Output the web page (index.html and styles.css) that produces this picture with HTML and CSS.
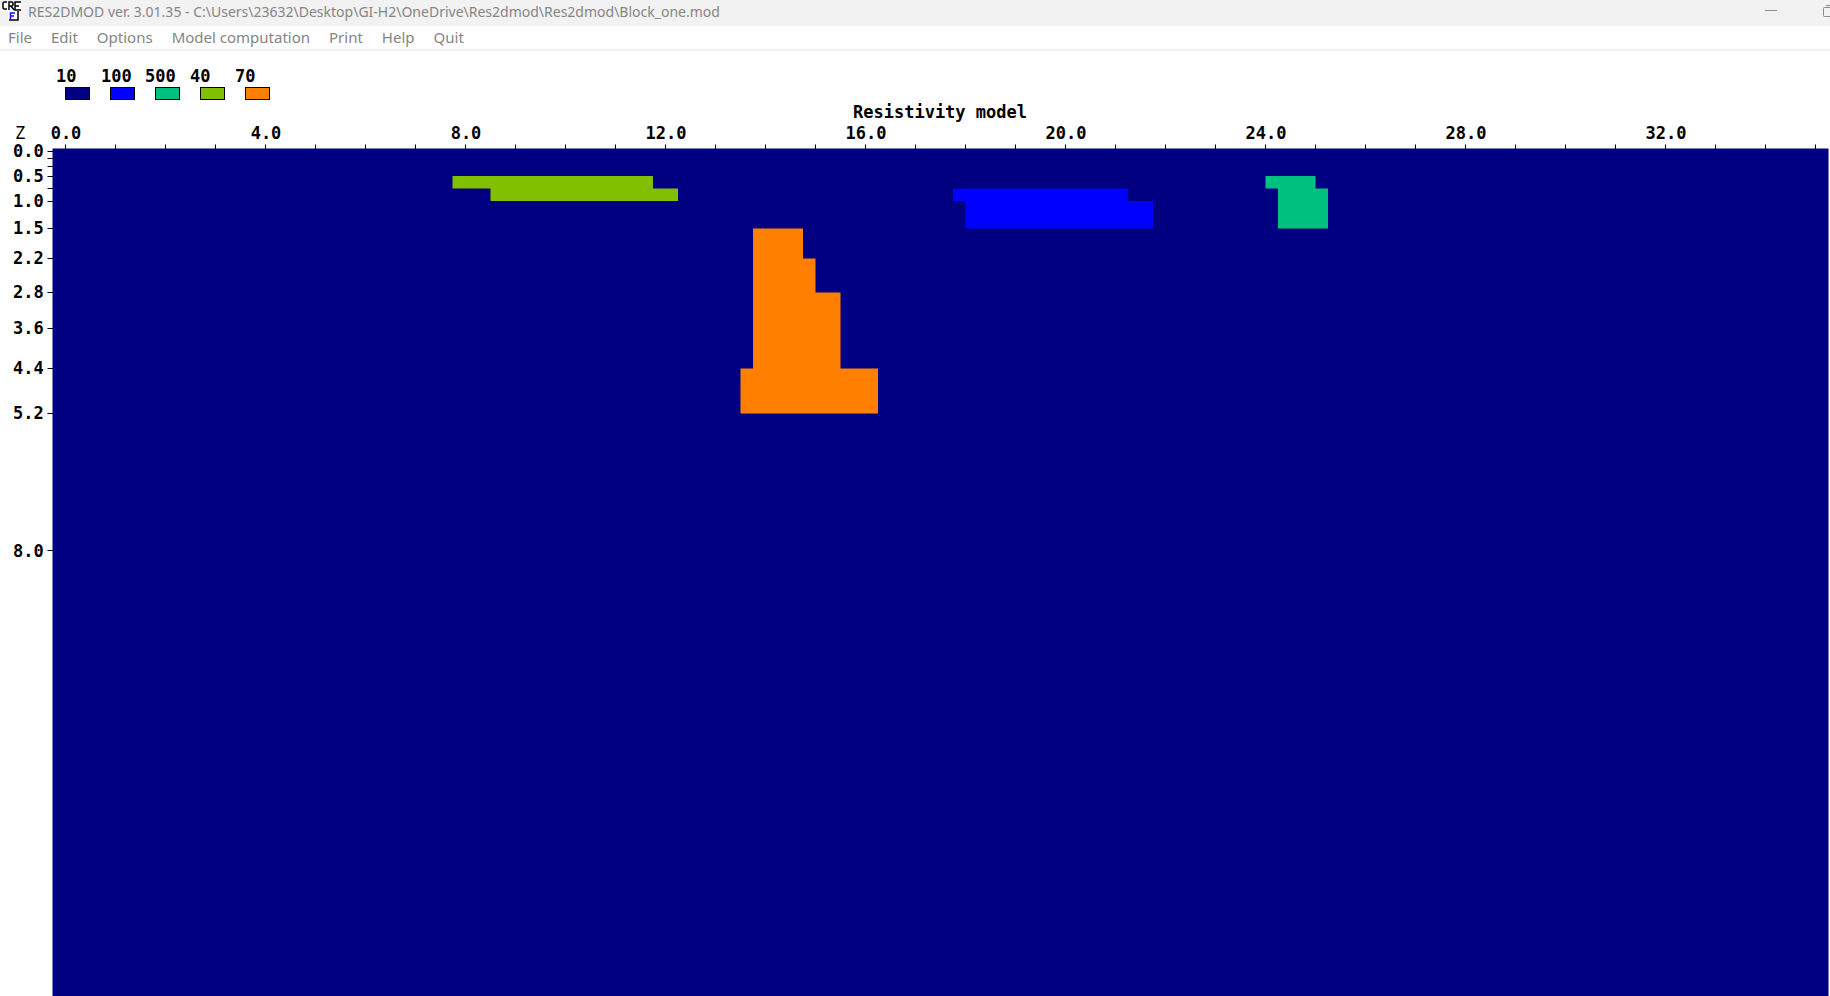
FILE: index.html
```html
<!DOCTYPE html>
<html lang="en">
<head>
<meta charset="utf-8">
<title>RES2DMOD</title>
<link rel="stylesheet" href="styles.css">
</head>
<body>
<header class="titlebar">
  <svg class="app-icon" viewBox="0 0 20 21" aria-hidden="true">
    <path fill="#fff" d="M2 1h18v10H2zM7 10h11v11H7z"/>
    <path fill="none" stroke="#000" stroke-width="1.500" d="M6 2H3L2 3v5l1 1h3M8 10V2h3l1 1v2l-1 1H8m2 0 3 4M20 2h-6v8h6M14 6h4M17 11v9H8"/>
    <path fill="none" stroke="#1010ff" stroke-width="1.500" d="M9.500 19v-6H14M9.500 16H13"/>
  </svg>
  <h1 class="title">RES2DMOD ver. 3.01.35 - C:\Users\23632\Desktop\GI-H2\OneDrive\Res2dmod\Res2dmod\Block_one.mod</h1>
  <div class="window-buttons">
    <button class="window-button" aria-label="Minimize"><svg width="12" height="14" viewBox="0 0 12 14"><path d="M0 6.5h12"/></svg></button>
    <button class="window-button" aria-label="Restore"><svg width="12" height="14" viewBox="0 0 12 14"><path d="M.5 4.5q0-1 1-1h6q1 0 1 1v7q0 1-1 1h-6q-1 0-1-1zM3 1.500h6q2 0 2 2v7"/></svg></button>
  </div>
</header>
<nav class="menubar">
  <button class="menu-item">File</button>
  <button class="menu-item">Edit</button>
  <button class="menu-item">Options</button>
  <button class="menu-item">Model computation</button>
  <button class="menu-item">Print</button>
  <button class="menu-item">Help</button>
  <button class="menu-item">Quit</button>
</nav>
<main>
  <svg class="chart" viewBox="0 51 1830 945" role="img" aria-label="Resistivity model">
    <g class="label">
      <text x="56" y="82">10</text>
      <text x="101" y="82">100</text>
      <text x="145" y="82">500</text>
      <text x="190" y="82">40</text>
      <text x="235" y="82">70</text>
    </g>
    <g class="swatches">
      <rect class="r10" x="65.500" y="87.500" width="24" height="12"/>
      <rect class="r100" x="110.500" y="87.500" width="24" height="12"/>
      <rect class="r500" x="155.500" y="87.500" width="24" height="12"/>
      <rect class="r40" x="200.500" y="87.500" width="24" height="12"/>
      <rect class="r70" x="245.500" y="87.500" width="24" height="12"/>
    </g>
    <g class="label centered">
      <text x="940" y="118">Resistivity model</text>
      <text class="axis-name" x="20" y="139">Z</text>
      <text x="66" y="139">0.0</text>
      <text x="266" y="139">4.0</text>
      <text x="466" y="139">8.0</text>
      <text x="666" y="139">12.0</text>
      <text x="866" y="139">16.0</text>
      <text x="1066" y="139">20.0</text>
      <text x="1266" y="139">24.0</text>
      <text x="1466" y="139">28.0</text>
      <text x="1666" y="139">32.0</text>
    </g>
    <g class="label">
      <text x="13" y="157">0.0</text>
      <text x="13" y="182">0.5</text>
      <text x="13" y="207">1.0</text>
      <text x="13" y="234">1.5</text>
      <text x="13" y="264">2.2</text>
      <text x="13" y="298">2.8</text>
      <text x="13" y="334">3.6</text>
      <text x="13" y="374">4.4</text>
      <text x="13" y="419">5.2</text>
      <text x="13" y="557">8.0</text>
    </g>
    <path class="ticks" d="M65.500 144.500v5m50-5v5m50-5v5m50-5v5m50-5v5m50-5v5m50-5v5m50-5v5m50-5v5m50-5v5m50-5v5m50-5v5m50-5v5m50-5v5m50-5v5m50-5v5m50-5v5m50-5v5m50-5v5m50-5v5m50-5v5m50-5v5m50-5v5m50-5v5m50-5v5m50-5v5m50-5v5m50-5v5m50-5v5m50-5v5m50-5v5m50-5v5m50-5v5m50-5v5m50-5v5m50-5v5"/>
    <path class="ticks" d="M47.500 151.500h6m-6 7h6m-6 8h6m-6 10h6m-6 12h6m-6 13h6m-6 27h6m-6 30h6m-6 34h6m-6 36h6m-6 40h6m-6 45h6m-6 137h6"/>
    <rect class="r10" x="52.500" y="148.500" width="1776" height="848"/>
    <path class="r40" d="M452.500 176H653v12.500h25V201H490.500v-12.500h-38z"/>
    <path class="r100" d="M953 188.500h175V201h25v27.500H965.500V201H953z"/>
    <path class="r500" d="M1265.500 176h50v12.500H1328v40h-50v-40h-12.500z"/>
    <path class="r70" d="M753 228.500h50v30h12.500v34h25v76H878v45H740.500v-45H753z"/>
  </svg>
</main>
</body>
</html>
```
FILE: styles.css
```css
body {
  margin: 0;
  background: #fff;
  font-family: "Noto Sans", sans-serif;
  color: #858585;
  overflow: hidden;
}

.titlebar {
  display: flex;
  align-items: flex-start;
  height: 26px;
  background: #f2f2f2;
}

.app-icon {
  width: 20px;
  height: 21px;
  margin: 0 7px 0 1px;
}

.title {
  flex: 1;
  margin: 0;
  font-size: 14px;
  font-weight: 400;
  line-height: 23px;
  white-space: nowrap;
}

.window-buttons {
  display: flex;
  flex: none;
  gap: 46px;
  margin: 4px -5px 0 0;
}

.window-button,
.menu-item {
  padding: 0;
  border: 0;
  background: none;
  font: inherit;
  color: inherit;
}

.window-button svg {
  display: block;
  fill: none;
  stroke: #8a8a8a;
}

.menubar {
  display: flex;
  gap: 19px;
  height: 23px;
  padding-left: 8px;
  border-bottom: 2px solid #f0f0f0;
  font-size: 15px;
  line-height: 23px;
}

.chart {
  display: block;
  width: 100%;
  height: auto;
}

.label {
  font: bold 17px "DejaVu Sans Mono", monospace;
  fill: #000;
}

.label .axis-name {
  font-weight: 400;
}

.centered {
  text-anchor: middle;
}

.swatches {
  stroke: #000;
}

.ticks {
  fill: none;
  stroke: #000;
}

.r10 { fill: #000080; }
.r100 { fill: #0000ff; }
.r500 { fill: #00c080; }
.r40 { fill: #80c000; }
.r70 { fill: #ff8000; }
```
